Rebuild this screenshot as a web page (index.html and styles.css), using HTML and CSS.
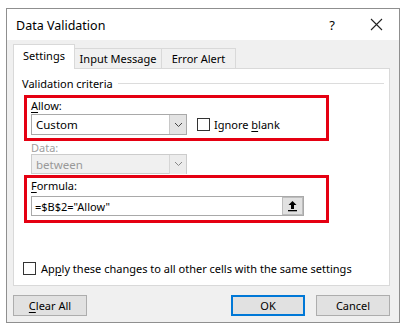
FILE: index.html
```html
<!DOCTYPE html>
<html>
<head>
<meta charset="utf-8">
<link rel="stylesheet" href="styles.css">
</head>
<body>
<div class="dialog">
  <div class="titlebar">
    <span class="title">Data Validation</span>
    <span class="help">?</span>
    <span class="close"><svg width="13" height="13" viewBox="0 0 13 13"><path d="M1 1L12 12M12 1L1 12" stroke="#222" stroke-width="1.1" fill="none"/></svg></span>
  </div>
  <div class="body">
    <div class="tabs">
      <div class="tab active">Settings</div>
      <div class="tab tab-input">Input Message</div>
      <div class="tab tab-error">Error Alert</div>
    </div>
    <div class="panel">
      <div class="group-title"><span>Validation criteria</span><span class="group-line"></span></div>
      <div class="hl hl-allow">
        <div class="label"><u>A</u>llow:</div>
        <div class="row">
          <div class="combo"><span class="combo-text">Custom</span><span class="combo-btn"><svg width="9" height="6" viewBox="0 0 9 6"><path d="M1 1L4.5 4.5L8 1" stroke="#444" fill="none"/></svg></span></div>
          <div class="check"><span class="box"></span><span>Ignore <u>b</u>lank</span></div>
        </div>
      </div>
      <div class="data-block">
        <div class="label disabled">Data:</div>
        <div class="combo combo-disabled"><span class="combo-text">between</span><span class="combo-btn"><svg width="9" height="6" viewBox="0 0 9 6"><path d="M1 1L4.5 4.5L8 1" stroke="#888" fill="none"/></svg></span></div>
      </div>
      <div class="hl hl-formula">
        <div class="label"><u>F</u>ormula:</div>
        <div class="formula"><span class="formula-text">=$B$2="Allow"</span><span class="ref-btn"><svg width="11" height="12" viewBox="0 0 11 12"><path d="M5.5 1L1.5 5H4V9H7V5H9.5Z" fill="#000"/><rect x="1" y="10" width="9" height="1.3" fill="#000"/></svg></span></div>
      </div>
      <div class="spacer"></div>
      <div class="check apply"><span class="box"></span><span>Ap<u>p</u>ly these changes to all other cells with the same settings</span></div>
    </div>
    <div class="buttons">
      <div class="btn"><u>C</u>lear All</div>
      <div class="grow"></div>
      <div class="btn default">OK</div>
      <div class="btn">Cancel</div>
    </div>
  </div>
</div>
</body>
</html>
```

FILE: styles.css
```css
* { box-sizing: border-box; }
html, body { margin: 0; padding: 0; background: #fff; }
body {
  font-family: "Noto Sans", "Open Sans", sans-serif;
  font-size: 11px;
  color: #000;
  width: 412px;
  height: 336px;
  overflow: hidden;
}
u { text-decoration: underline; text-underline-offset: 2px; text-decoration-thickness: 1px; }
.dialog {
  margin: 8px 0 0 6px;
  width: 394px;
  height: 315px;
  border: 1px solid #8f8f8f;
  display: flex;
  flex-direction: column;
  background: #f0f0f0;
}
.titlebar {
  height: 31px;
  background: #fff;
  display: flex;
  align-items: center;
  padding-left: 9px;
  flex: none;
}
.title { font-size: 12.5px; flex: 1; padding-top: 1px; }
.help { font-size: 13px; width: 16px; margin-right: 30px; text-align: center; }
.close { width: 13px; height: 13px; margin-right: 16px; display: flex; }
.body {
  flex: 1;
  display: flex;
  flex-direction: column;
  padding: 4px 9px 0 6px;
}
.tabs { display: flex; height: 24px; align-items: flex-end; position: relative; z-index: 1; }
.tab {
  height: 20px;
  border: 1px solid #d9d9d9;
  border-bottom: none;
  display: flex;
  align-items: center;
  justify-content: center;
  background: #f0f0f0;
  margin-left: -1px;
}
.tab.active {
  height: 25px;
  margin-left: 0;
  background: #fff;
  padding-bottom: 3px;
  margin-bottom: -1px;
  width: 62px;
}
.tab-input { width: 88px; }
.tab-error { width: 75px; }
.panel {
  background: #fff;
  border: 1px solid #d9d9d9;
  height: 218px;
  display: flex;
  flex-direction: column;
  padding: 6px 5px 0 8px;
}
.group-title { display: flex; align-items: center; height: 16px; }
.group-line { flex: 1; border-top: 1px solid #dcdcdc; margin-left: 5px; margin-top: 1px; }
.hl {
  border: 3px solid #e50012;
  width: 305px;
  margin-left: 2px;
  padding: 0 0 0 4px;
}
.hl-allow { margin-top: 4px; height: 46px; }
.hl-formula { margin-top: 1px; height: 48px; }
.label { height: 16px; line-height: 16px; }
.label.disabled { color: #a0a0a0; }
.row { display: flex; align-items: center; }
.combo {
  width: 156px;
  height: 21px;
  border: 1px solid #a9a9a9;
  background: #fff;
  display: flex;
  align-items: center;
}
.combo-text { flex: 1; padding-left: 4px; font-size: 11.5px; }
.combo-btn {
  width: 17px;
  height: 19px;
  background: #e3e3e3;
  border-left: 1px solid #c8c8c8;
  display: flex;
  align-items: center;
  justify-content: center;
}
.combo-disabled { background: #f0f0f0; border-color: #cccccc; color: #999; }
.combo-disabled .combo-btn { background: #ececec; border-left-color: #d6d6d6; }
.data-block { padding-left: 9px; }
.data-block .label { height: 13px; line-height: 13px; }
.data-block .combo { height: 20px; }
.check { display: flex; align-items: center; }
.box {
  width: 13px;
  height: 13px;
  border: 1px solid #333;
  background: #fff;
  margin-right: 4px;
}
.row .check { margin-left: 10px; }
.formula {
  width: 273px;
  height: 20px;
  border: 1px solid #a9a9a9;
  display: flex;
  align-items: center;
  margin-top: 2px;
}
.formula-text { flex: 1; padding-left: 3px; font-size: 11px; }
.ref-btn {
  width: 21px;
  height: 18px;
  background: #e1e1e1;
  border: 1px solid #bdbdbd;
  display: flex;
  align-items: center;
  justify-content: center;
}
.spacer { flex: 1; }
.apply { margin-left: 1px; margin-bottom: 9px; }
.apply .box { margin-right: 5px; }
.buttons {
  display: flex;
  margin-top: 9px;
  height: 21px;
}
.grow { flex: 1; }
.btn {
  width: 74px;
  height: 21px;
  background: #e1e1e1;
  border: 1px solid #adadad;
  display: flex;
  align-items: center;
  justify-content: center;
}
.btn.default { border: 2px solid #0078d7; margin-right: 11px; }
```
